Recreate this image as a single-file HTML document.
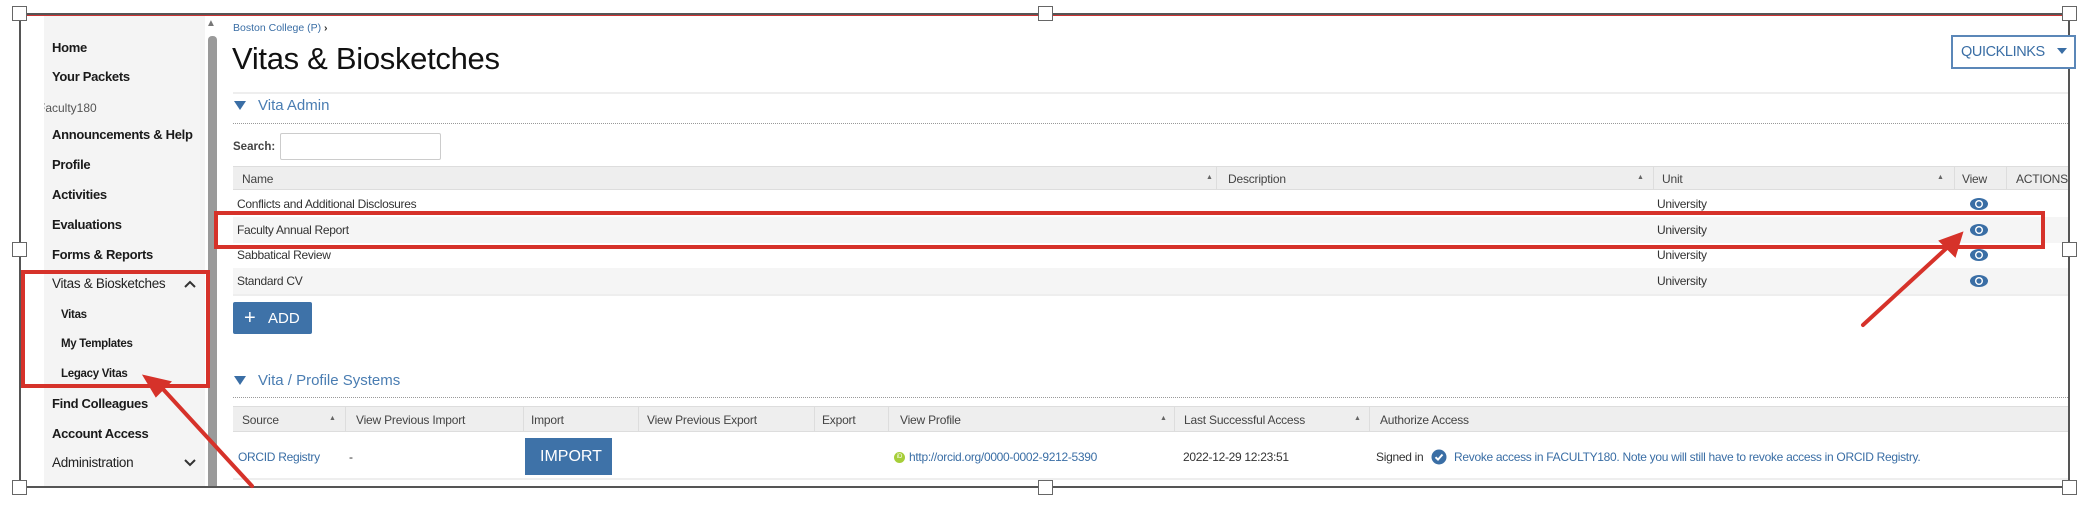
<!DOCTYPE html>
<html><head><meta charset="utf-8"><style>
*{margin:0;padding:0;box-sizing:border-box}
body{width:2096px;height:526px;background:#fff;position:relative;overflow:hidden;font-family:"Liberation Sans",sans-serif;color:#222}
.a{position:absolute;white-space:nowrap}
.nav{position:absolute;left:52px;font-size:13px;font-weight:bold;color:#1a1a1a;line-height:16px;letter-spacing:-0.3px}
.sub{left:61px;font-size:11.5px}
.t{position:absolute;font-size:12px;color:#333;line-height:14px;letter-spacing:-0.3px;white-space:nowrap}
.hd{position:absolute;font-size:12px;color:#444;line-height:14px;white-space:nowrap;letter-spacing:-0.2px}
.sep{position:absolute;width:1px;background:#ddd}
.arr{position:absolute;font-size:7px;color:#666}
.lnk{color:#3a6ea5}
.h{position:absolute;width:15px;height:15px;background:#fff;border:1px solid #666}
</style></head><body>
<div class="a" style="left:20px;top:13px;width:2050px;height:2px;background:#555"></div>
<div class="a" style="left:20px;top:15px;width:2050px;height:1px;background:#c33"></div>
<div class="a" style="left:20px;top:486px;width:2050px;height:2px;background:#555"></div>
<div class="a" style="left:19px;top:13px;width:2px;height:475px;background:#555"></div>
<div class="a" style="left:2068px;top:13px;width:2px;height:475px;background:#555"></div>

<div class="a" style="left:44px;top:16px;width:161px;height:470px;background:#f4f4f4"></div>
<div class="a" style="left:208px;top:36px;width:9px;height:450px;background:#9a9a9a;border-radius:4px 4px 0 0"></div>
<div class="a" style="left:206px;top:18px;font-size:10px;color:#777">▲</div>
<div class="nav" style="top:40px">Home</div>
<div class="nav" style="top:69px">Your Packets</div>
<div class="a" style="left:38px;top:101px;font-size:12px;color:#555">Faculty180</div>
<div class="a" style="left:21px;top:98px;width:23px;height:18px;background:#fff"></div>
<div class="nav" style="top:127px">Announcements &amp; Help</div>
<div class="nav" style="top:157px">Profile</div>
<div class="nav" style="top:187px">Activities</div>
<div class="nav" style="top:217px">Evaluations</div>
<div class="nav" style="top:247px">Forms &amp; Reports</div>
<div class="nav" style="top:276px;font-weight:normal;color:#222;font-size:13.5px">Vitas &amp; Biosketches</div>
<svg class="a" style="left:183px;top:279px" width="14" height="10"><path d="M2 8 L7 3 L12 8" fill="none" stroke="#333" stroke-width="2"/></svg>
<div class="nav sub" style="top:307px">Vitas</div>
<div class="nav sub" style="top:336px">My Templates</div>
<div class="nav sub" style="top:366px">Legacy Vitas</div>
<div class="nav" style="top:396px">Find Colleagues</div>
<div class="nav" style="top:426px">Account Access</div>
<div class="nav" style="top:455px;font-weight:normal;color:#222;font-size:13.5px">Administration</div>
<svg class="a" style="left:183px;top:458px" width="14" height="10"><path d="M2 2 L7 7 L12 2" fill="none" stroke="#333" stroke-width="2"/></svg>
<div class="a" style="left:21px;top:270px;width:189px;height:118px;border:4px solid #d6322a"></div>

<div class="a lnk" style="left:233px;top:22px;font-size:10.5px">Boston College (P) <b style="color:#333">›</b></div>
<div class="a" style="left:232px;top:41px;font-size:31px;color:#111;letter-spacing:-0.3px">Vitas &amp; Biosketches</div>
<div class="a" style="left:1951px;top:35px;width:125px;height:34px;border:2px solid #5b87b8;background:#fff"></div>
<div class="a lnk" style="left:1961px;top:44px;font-size:14.5px;letter-spacing:-0.4px">QUICKLINKS</div>
<div class="a" style="left:2057px;top:48px;width:0;height:0;border-left:5px solid transparent;border-right:5px solid transparent;border-top:6px solid #3a6ea5"></div>
<div class="a" style="left:233px;top:92px;width:1835px;height:2px;background:#eee"></div>

<div class="a" style="left:234px;top:101px;width:0;height:0;border-left:6px solid transparent;border-right:6px solid transparent;border-top:9px solid #3a6ea5"></div>
<div class="a" style="left:258px;top:97px;font-size:15px;color:#4a7db2">Vita Admin</div>
<div class="a" style="left:233px;top:123px;width:1835px;border-top:1px dotted #999"></div>
<div class="a" style="left:233px;top:141px;font-size:11.5px;font-weight:bold;color:#444">Search:</div>
<div class="a" style="left:280px;top:133px;width:161px;height:27px;border:1px solid #ccc;border-radius:2px;background:#fff"></div>

<div class="a" style="left:233px;top:166px;width:1835px;height:24px;background:#eee;border-top:1px solid #ddd;border-bottom:1px solid #ddd"></div>
<div class="hd" style="left:242px;top:172px">Name</div>
<div class="arr" style="left:1206px;top:174px">▲</div>
<div class="sep" style="left:1216px;top:167px;height:23px"></div>
<div class="hd" style="left:1228px;top:172px">Description</div>
<div class="arr" style="left:1637px;top:174px">▲</div>
<div class="sep" style="left:1653px;top:167px;height:23px"></div>
<div class="hd" style="left:1662px;top:172px">Unit</div>
<div class="arr" style="left:1937px;top:174px">▲</div>
<div class="sep" style="left:1954px;top:167px;height:23px"></div>
<div class="hd" style="left:1962px;top:172px">View</div>
<div class="sep" style="left:2006px;top:167px;height:23px"></div>
<div class="hd" style="left:2016px;top:172px">ACTIONS</div>

<div class="a" style="left:233px;top:217px;width:1835px;height:26px;background:#f5f5f5"></div>
<div class="a" style="left:233px;top:268px;width:1835px;height:26px;background:#f5f5f5"></div>
<div class="a" style="left:233px;top:294px;width:1835px;height:2px;background:#eee"></div>
<div class="t" style="left:237px;top:197px">Conflicts and Additional Disclosures</div>
<div class="t" style="left:237px;top:223px">Faculty Annual Report</div>
<div class="t" style="left:237px;top:248px">Sabbatical Review</div>
<div class="t" style="left:237px;top:274px">Standard CV</div>
<div class="t" style="left:1657px;top:197px">University</div>
<div class="t" style="left:1657px;top:223px">University</div>
<div class="t" style="left:1657px;top:248px">University</div>
<div class="t" style="left:1657px;top:274px">University</div>
<svg class="a" style="left:0;top:0" width="2096" height="526">
<g fill="#3a6ea5">
<g transform="translate(1979,204)"><ellipse rx="9" ry="6"/><circle r="4" fill="#fff"/><circle r="2.6"/></g>
<g transform="translate(1979,230)"><ellipse rx="9" ry="6"/><circle r="4" fill="#fff"/><circle r="2.6"/></g>
<g transform="translate(1979,255)"><ellipse rx="9" ry="6"/><circle r="4" fill="#fff"/><circle r="2.6"/></g>
<g transform="translate(1979,281)"><ellipse rx="9" ry="6"/><circle r="4" fill="#fff"/><circle r="2.6"/></g>
</g>
</svg>
<div class="a" style="left:214px;top:211px;width:1831px;height:38px;border:4px solid #d6322a"></div>

<div class="a" style="left:233px;top:302px;width:79px;height:32px;background:#3e72a8;border-radius:2px"></div>
<div class="a" style="left:244px;top:307px;font-size:20px;color:#fff">+</div>
<div class="a" style="left:268px;top:310px;font-size:15px;color:#fff">ADD</div>

<div class="a" style="left:234px;top:376px;width:0;height:0;border-left:6px solid transparent;border-right:6px solid transparent;border-top:9px solid #3a6ea5"></div>
<div class="a" style="left:258px;top:372px;font-size:15px;color:#4a7db2">Vita / Profile Systems</div>
<div class="a" style="left:233px;top:397px;width:1835px;border-top:1px dotted #999"></div>
<div class="a" style="left:233px;top:406px;width:1835px;height:26px;background:#eee;border-top:1px solid #ddd;border-bottom:1px solid #ddd"></div>
<div class="hd" style="left:242px;top:413px">Source</div>
<div class="arr" style="left:329px;top:415px">▲</div>
<div class="sep" style="left:345px;top:407px;height:25px"></div>
<div class="hd" style="left:356px;top:413px">View Previous Import</div>
<div class="sep" style="left:523px;top:407px;height:25px"></div>
<div class="hd" style="left:531px;top:413px">Import</div>
<div class="sep" style="left:638px;top:407px;height:25px"></div>
<div class="hd" style="left:647px;top:413px">View Previous Export</div>
<div class="sep" style="left:814px;top:407px;height:25px"></div>
<div class="hd" style="left:822px;top:413px">Export</div>
<div class="sep" style="left:888px;top:407px;height:25px"></div>
<div class="hd" style="left:900px;top:413px">View Profile</div>
<div class="arr" style="left:1160px;top:415px">▲</div>
<div class="sep" style="left:1174px;top:407px;height:25px"></div>
<div class="hd" style="left:1184px;top:413px">Last Successful Access</div>
<div class="arr" style="left:1354px;top:415px">▲</div>
<div class="sep" style="left:1369px;top:407px;height:25px"></div>
<div class="hd" style="left:1380px;top:413px">Authorize Access</div>
<div class="a" style="left:233px;top:478px;width:1835px;height:2px;background:#eee"></div>
<div class="t lnk" style="left:238px;top:450px">ORCID Registry</div>
<div class="t" style="left:349px;top:450px">-</div>
<div class="a" style="left:525px;top:438px;width:87px;height:37px;background:#3e72a8"></div>
<div class="a" style="left:540px;top:448px;font-size:16px;color:#fff">IMPORT</div>
<div class="a" style="left:894px;top:452px;width:11px;height:11px;border-radius:50%;background:#a6ce39;color:#fff;font-size:6px;line-height:11px;text-align:center">iD</div>
<div class="t lnk" style="left:909px;top:450px">http://orcid.org/0000-0002-9212-5390</div>
<div class="t" style="left:1183px;top:450px">2022-12-29 12:23:51</div>
<div class="t" style="left:1376px;top:450px">Signed in</div>
<svg class="a" style="left:1431px;top:449px" width="16" height="16"><circle cx="8" cy="8" r="7.5" fill="#3a6ea5"/><path d="M4.5 8.2 L7 10.6 L11.5 5.5" fill="none" stroke="#fff" stroke-width="2"/></svg>
<div class="t lnk" style="left:1454px;top:450px">Revoke access in FACULTY180. Note you will still have to revoke access in ORCID Registry.</div>

<svg class="a" style="left:0;top:0" width="2096" height="526">
<g stroke="#d6322a" stroke-width="4" fill="#d6322a" stroke-linecap="round">
<line x1="252" y1="486" x2="162" y2="388"/>
<polygon points="144,376 170,382 156,396" stroke-width="2"/>
<line x1="1863" y1="325" x2="1950" y2="245"/>
<polygon points="1962,233 1955,256 1940,241" stroke-width="2"/>
</g>
</svg>

<div class="h" style="left:12px;top:6px"></div>
<div class="h" style="left:1038px;top:6px"></div>
<div class="h" style="left:2062px;top:6px"></div>
<div class="h" style="left:12px;top:242px"></div>
<div class="h" style="left:2062px;top:242px"></div>
<div class="h" style="left:12px;top:480px"></div>
<div class="h" style="left:1038px;top:480px"></div>
<div class="h" style="left:2062px;top:480px"></div>
</body></html>
